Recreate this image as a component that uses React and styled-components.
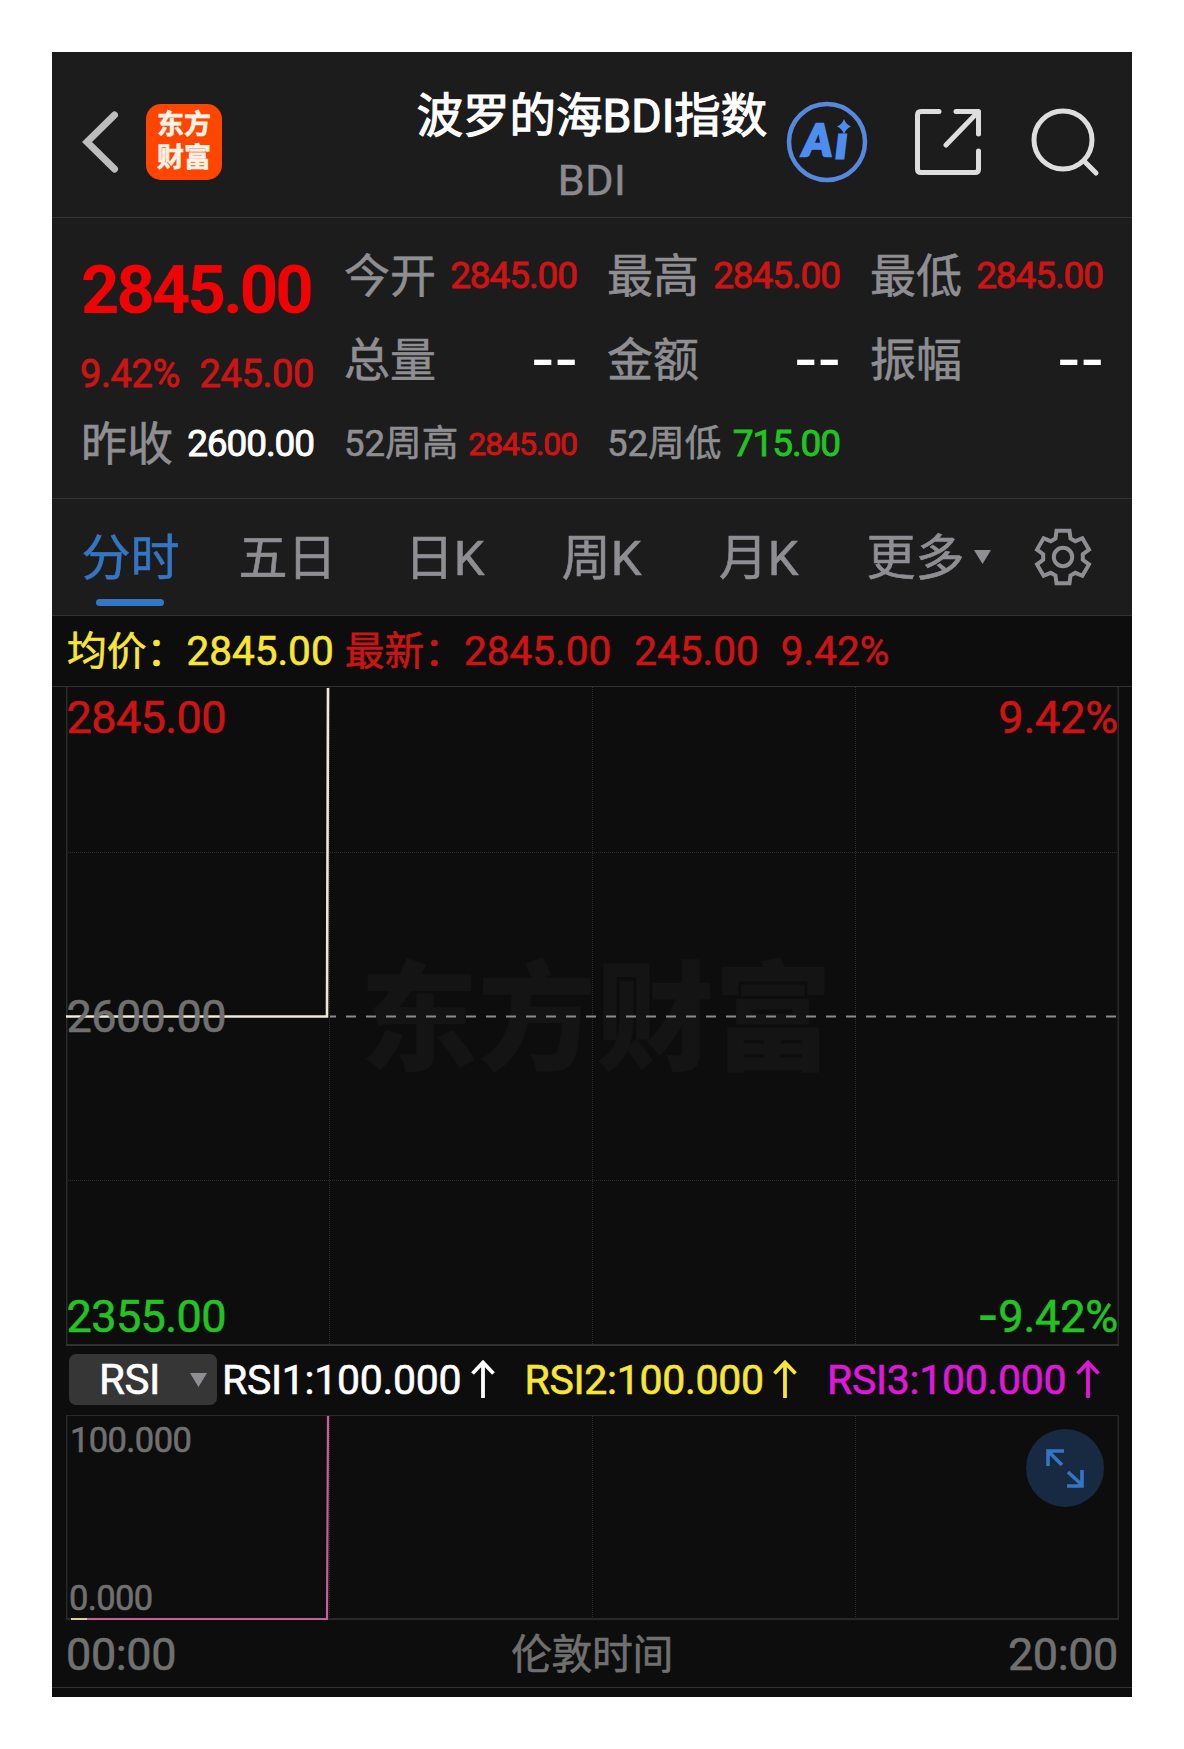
import { useState } from "react";
import styled, { createGlobalStyle } from 'styled-components';

const GlobalStyle = createGlobalStyle`
  body{
    margin: 0;
    background-color: #fff;
    font-family: Roboto, "Noto Sans CJK SC", sans-serif;
  }
`

const Screen = styled.div`
  width: 1080px;
  height: 1645px;
  margin: 52px;
  background-color: #0d0d0d;
  overflow: hidden;
  white-space: nowrap;
  -webkit-text-stroke-width: 0.6px;
`

const Header = styled.header`
  display: grid;
  grid-template-columns: 1fr auto 1fr;
  height: 165px;
  background-color: #1c1c1c;
  border-bottom: 1px solid #323434;
`

const HeaderLeft = styled.div`
  display: flex;
  align-items: center;
  gap: 27px;
  padding: 15px 0 0 30px;
`

const HeaderRight = styled.div`
  display: flex;
  align-items: center;
  justify-content: flex-end;
  padding: 15px 32px 0 0;
`

const ShareIcon = styled.svg`
  margin: 0 50px 0 47px;
`

const Logo = styled.div`
  width: 76px;
  height: 76px;
  box-sizing: border-box;
  padding-top: 5px;
  border-radius: 15px;
  background-color: #ff4600;
  color: #fff4ea;
  font-size: 27px;
  font-weight: 700;
  line-height: 33px;
  text-align: center;
`

const Title = styled.div`
  padding-top: 30px;
  text-align: center;
  h1{
    margin: 0;
    color: #fff;
    font-size: 46.4px;
    font-weight: 400;
    line-height: 68px;
    -webkit-text-stroke-width: 1.2px;
  }
  p{
    margin: 0;
    color: #8a8a8e;
    font-size: 43px;
    letter-spacing: 0.6px;
    line-height: 60px;
  }
`

const Quote = styled.section`
  display: grid;
  grid-template-columns: repeat(4, 233px);
  grid-template-rows: repeat(3, 84px);
  column-gap: 30px;
  padding: 16px 30px 12px 29px;
  background-color: #1c1c1c;
  border-bottom: 1px solid #323434;
`

const Price = styled.div`
  grid-row: span 2;
  padding-top: 14px;
  color: #ee0404;
  font-size: 67px;
  font-weight: 700;
  letter-spacing: -2.9px;
  line-height: 84px;
  -webkit-text-stroke-width: 0;
`

const Change = styled.div`
  display: flex;
  justify-content: space-between;
  height: 69px;
  margin-left: -1px;
  color: #cc1414;
  font-size: 38px;
  font-weight: 400;
  letter-spacing: -0.4px;
  -webkit-text-stroke-width: 0.9px;
`

const Cell = styled.div`
  display: flex;
  justify-content: space-between;
  line-height: 84px;
`

const Label = styled.span`
  color: #8e8e93;
  font-size: ${props => props.$small ? "36.6px" : "46px"};
`

const Value = styled.span`
  color: ${props => props.$color};
  font-size: ${props => props.$small ? "32px" : "37px"};
  font-weight: 400;
  letter-spacing: -1.1px;
  -webkit-text-stroke-width: 0.9px;
`

const Dashes = styled.span`
  margin-right: -1px;
  color: #fff;
  font-family: "DejaVu Sans", sans-serif;
  font-size: 65px;
  line-height: 79px;
  -webkit-text-stroke-width: 0;
`

const Tabs = styled.nav`
  display: grid;
  grid-template-columns: repeat(6, 157px) 1fr;
  grid-template-rows: 116px;
  height: 116px;
  background-color: #1c1c1c;
  border-bottom: 1px solid #323434;
`

const Tab = styled.div`
  position: relative;
  color: ${props => props.$active ? "#3576c4" : "#8e8e93"};
  font-size: 49px;
  line-height: 120px;
  text-align: center;
  cursor: pointer;
`

const Underline = styled.span`
  position: absolute;
  left: 44px;
  bottom: 9px;
  width: 68px;
  height: 7px;
  border-radius: 4px;
  background-color: #3576c4;
`

const MoreArrow = styled.svg`
  position: absolute;
  left: 137px;
  top: 51px;
`

const GearCell = styled.div`
  display: flex;
  align-items: center;
  justify-content: center;
`

const InfoBar = styled.div`
  display: flex;
  height: 70px;
  padding-left: 15px;
  border-bottom: 1px solid #323434;
  font-size: 40.5px;
  line-height: 70px;
`

const Info = styled.span`
  color: ${props => props.$color};
  margin-right: ${props => props.$gap || 0}px;
  b{
    font-size: 39.8px;
    font-weight: 400;
  }
`

const Colon = styled.span`
  font-size: 39.8px;
`

const Plot = styled.section`
  position: relative;
  width: 1053px;
  height: ${props => props.$height}px;
  margin-left: 14px;
  svg{
    display: block;
  }
`

const AxisLabel = styled.span`
  position: absolute;
  ${props => props.$right ? "right: 1px" : `left: ${props.$left || 0}px`};
  top: ${props => props.$top}px;
  color: ${props => props.$color};
  font-size: ${props => props.$size || 45}px;
  line-height: 50px;
  letter-spacing: ${props => props.$right ? "-0.2px" : "-0.6px"};
`

const Minus = styled.span`
  font-family: "DejaVu Sans", sans-serif;
  font-size: 58px;
  line-height: 0;
  vertical-align: -2px;
  -webkit-text-stroke-width: 0;
`

const Watermark = styled.div`
  position: absolute;
  left: 294px;
  top: 254px;
  color: #141414;
  font-size: 118px;
  font-weight: 900;
  line-height: 160px;
`

const IndicatorBar = styled.div`
  display: flex;
  align-items: center;
  height: 67px;
  padding: 0 0 2px 17px;
  font-size: 41px;
`

const Select = styled.button`
  display: flex;
  align-items: center;
  justify-content: space-between;
  width: 148px;
  height: 51px;
  margin-right: 5px;
  padding: 0 10px 0 30px;
  border: none;
  border-radius: 7px;
  background-color: #363636;
  color: #fff;
  font-family: inherit;
  font-size: 42px;
  letter-spacing: -0.4px;
  -webkit-text-stroke-width: 0.6px;
`

const Indicator = styled.span`
  width: 302.5px;
  color: ${props => props.$color};
  letter-spacing: -0.3px;
`

const Expand = styled.svg`
  position: absolute;
  right: 15px;
  top: 14px;
`

const TimeAxis = styled.footer`
  display: grid;
  grid-template-columns: 1fr auto 1fr;
  height: 67px;
  padding: 0 14px 0 14px;
  border-bottom: 1px solid #323434;
  color: #707070;
  font-size: 45px;
  letter-spacing: -0.4px;
  line-height: 69px;
  b{
    font-size: 40.8px;
    font-weight: 400;
    line-height: 71px;
  }
  span:last-child{
    text-align: right;
  }
`

const red = "#cc1414";
const green = "#22c322";

const cells = [
  { label: "今开", value: "2845.00", color: red },
  { label: "最高", value: "2845.00", color: red },
  { label: "最低", value: "2845.00", color: red },
  { label: "总量" },
  { label: "金额" },
  { label: "振幅" },
  { label: "昨收", value: "2600.00", color: "#fff" },
  { label: "52周高", value: "2845.00", color: red, smallLabel: true, smallValue: true },
  { label: "52周低", value: "715.00", color: green, smallLabel: true },
];

const tabs = ["分时", "五日", "日K", "周K", "月K", "更多"];

const indicators = [
  { text: "RSI1:100.000", color: "#fff" },
  { text: "RSI2:100.000", color: "#f7e636" },
  { text: "RSI3:100.000", color: "#df18d8" },
];

// six teeth, four points for each
const gearPoints = () => {
  const points = [];
  for (let i = 0; i < 6; i++) {
    [[-22, 20], [-14, 27], [14, 27], [22, 20]].forEach(([angle, r]) => {
      const a = (i * 60 + angle) * Math.PI / 180;
      points.push(`${(r * Math.sin(a)).toFixed(1)},${(-r * Math.cos(a)).toFixed(1)}`);
    });
  }
  return points.join(" ");
}

const Triangle = () => <path d="M0 0H17L8.5 14Z" fill="#8e8e93" />

const ArrowIcon = styled.svg`
  margin-left: 9.5px;
  vertical-align: -4px;
`

const UpArrow = ({ color }) => (
  <ArrowIcon width="24" height="38" viewBox="0 0 24 38" fill="none" stroke={color} strokeWidth="3.8">
    <path d="M12 38V3M1.500 13.500L12 2.500L22.500 13.500" />
  </ArrowIcon>
)

const App = () => {
  const [active, setActive] = useState("分时");

  return (
    <>
      <GlobalStyle />
      <Screen>
        <Header>
          <HeaderLeft>
            <svg width="37" height="62" viewBox="0 0 37 62" fill="none" stroke="#bdbdbd" strokeWidth="7" strokeLinecap="round">
              <path d="M32.500 4L5 31L32.500 58" />
            </svg>
            <Logo>东方<br />财富</Logo>
          </HeaderLeft>
          <Title>
            <h1>波罗的海BDI指数</h1>
            <p>BDI</p>
          </Title>
          <HeaderRight>
            <svg width="82" height="82" viewBox="0 0 82 82">
              <circle cx="41" cy="41" r="38" fill="none" stroke="#5688dc" strokeWidth="4.500" />
              <g fill="#4f8cf0" stroke="#4f8cf0" fontFamily="Lato, sans-serif" fontStyle="italic" fontWeight="900">
                <text x="17" y="55" fontSize="44" strokeWidth="2.500" textLength="29" lengthAdjust="spacingAndGlyphs">A</text>
                <text x="50" y="57" fontSize="44" strokeWidth="3">ı</text>
                <path stroke="none" d="M58 18Q60 23.500 65 25.500Q60 27.500 58 33Q56 27.500 51 25.500Q56 23.500 58 18Z" />
              </g>
            </svg>
            <ShareIcon width="66" height="66" viewBox="0 0 66 66" fill="none" stroke="#dedede" strokeWidth="5" strokeLinecap="round" strokeLinejoin="round">
              <path d="M24 2.500H6Q2.500 2.500 2.500 6V60Q2.500 63.500 6 63.500H60Q63.500 63.500 63.500 60V42M41 2.500H63.500V25M63 3L31 36" />
            </ShareIcon>
            <svg width="69" height="69" viewBox="0 0 69 69" fill="none" stroke="#dedede" strokeWidth="5" strokeLinecap="round">
              <circle cx="32" cy="32" r="29" />
              <path d="M53 53L65 65" />
            </svg>
          </HeaderRight>
        </Header>

        <Quote>
          <Price>
            2845.00
            <Change><span>9.42%</span><span>245.00</span></Change>
          </Price>
          {
            cells.map((cell) => (
              <Cell key={cell.label}>
                <Label $small={cell.smallLabel}>{cell.label}</Label>
                {
                  cell.value
                    ? <Value $color={cell.color} $small={cell.smallValue}>{cell.value}</Value>
                    : <Dashes>--</Dashes>
                }
              </Cell>
            ))
          }
        </Quote>

        <Tabs>
          {
            tabs.map((tab) => (
              <Tab key={tab} $active={tab === active} onClick={() => setActive(tab)}>
                {tab}
                {tab === active && <Underline />}
                {tab === "更多" && <MoreArrow width="17" height="14"><Triangle /></MoreArrow>}
              </Tab>
            ))
          }
          <GearCell>
            <svg width="60" height="60" viewBox="-30 -30 60 60" fill="none" stroke="#8e8e93" strokeWidth="4">
              <polygon points={gearPoints()} />
              <circle r="9.200" />
            </svg>
          </GearCell>
        </Tabs>

        <InfoBar>
          <Info $color="#f7e636" $gap={11}><b>均价</b><Colon>：</Colon>2845.00</Info>
          <Info $color={red} $gap={23}><b>最新</b><Colon>：</Colon>2845.00</Info>
          <Info $color={red} $gap={22}>245.00</Info>
          <Info $color={red}>9.42%</Info>
        </InfoBar>

        <Plot $height={659}>
          <Watermark>东方财富</Watermark>
          <svg width="1053" height="659" fill="none" style={{ position: "relative" }}>
            <path d="M.5 0V658M1052.500 0V658" stroke="#2a2a2a" strokeWidth="2" />
            <path d="M0 658H1053" stroke="#303232" strokeWidth="2" />
            <path d="M263.500 0V657M526.500 0V657M789.500 0V657M0 165.500H1052M0 493.500H1052" stroke="#2c2c2c" strokeDasharray="1 1" />
            <path d="M264 329.500H1052" stroke="#8b8b8b" strokeWidth="2" strokeDasharray="10 10" strokeDashoffset="4" />
            <path d="M0 329.500H261L262 1" stroke="#efe9dc" strokeWidth="2.600" />
          </svg>
          <AxisLabel $top={305} $left={0.5} $color="#707070">2600.00</AxisLabel>
          <AxisLabel $top={6} $left={0.5} $color={red}>2845.00</AxisLabel>
          <AxisLabel $top={6} $color={red} $right>9.42%</AxisLabel>
          <AxisLabel $top={605} $left={0.5} $color={green}>2355.00</AxisLabel>
          <AxisLabel $top={605} $color={green} $right><Minus>-</Minus>9.42%</AxisLabel>
        </Plot>

        <IndicatorBar>
          <Select>
            RSI
            <svg width="17" height="14"><Triangle /></svg>
          </Select>
          {
            indicators.map((item) => (
              <Indicator key={item.text} $color={item.color}>
                {item.text}
                <UpArrow color={item.color} />
              </Indicator>
            ))
          }
        </IndicatorBar>

        <Plot $height={205}>
          <svg width="1053" height="205" fill="none">
            <path d="M.5 0V204M1052.500 0V204M0 204H1053" stroke="#292929" strokeWidth="2" />
            <path d="M0 .5H1053" stroke="#292929" />
            <path d="M263.500 1V203M526.500 1V203M789.500 1V203" stroke="#2c2c2c" strokeDasharray="1 1" />
            <path d="M5 204H261L262 1" stroke="#cb5f9c" strokeWidth="2.200" />
            <path d="M5 204H21" stroke="#d9d58f" strokeWidth="2" />
          </svg>
          <AxisLabel $top={0} $left={4} $size={34.5} $color="#707070">100.000</AxisLabel>
          <AxisLabel $top={158} $left={3} $size={34.5} $color="#707070">0.000</AxisLabel>
          <Expand width="78" height="78" viewBox="0 0 78 78" fill="none" stroke="#3576c4" strokeWidth="3.600">
            <circle cx="39" cy="39" r="39" fill="#182a42" stroke="none" />
            <path d="M22 37V22H38M23 23L36 36M42 43L56 56M41 57H56V41" />
          </Expand>
        </Plot>

        <TimeAxis>
          <span>00:00</span>
          <b>伦敦时间</b>
          <span>20:00</span>
        </TimeAxis>
      </Screen>
    </>
  )
}

export default App
